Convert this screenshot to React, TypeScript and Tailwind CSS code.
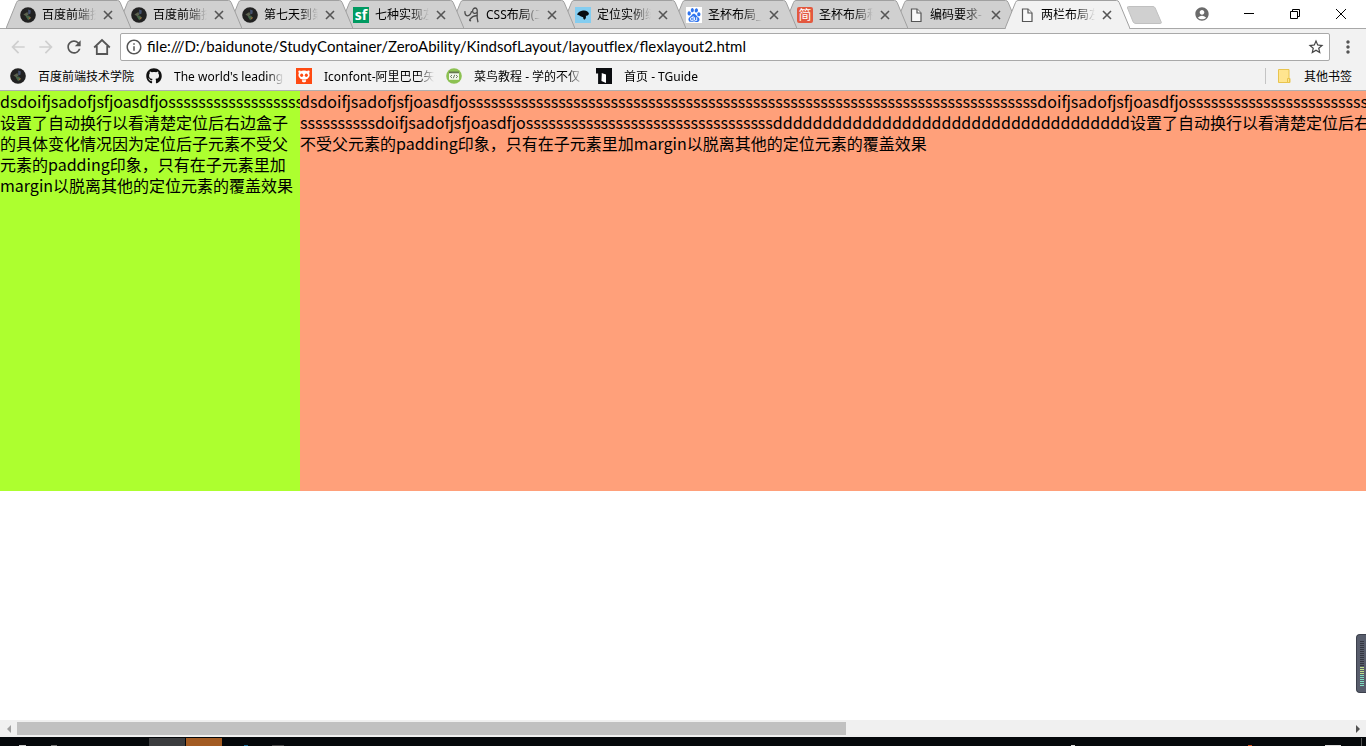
import type { ReactNode } from 'react';
import { MdArrowBack, MdArrowForward, MdRefresh, MdInfoOutline, MdStarBorder, MdAccountCircle, MdMoreVert } from 'react-icons/md';
import { FaGithub } from 'react-icons/fa';
import { SiBaidu } from 'react-icons/si';

const CollegeIcon = () => (
  <svg viewBox="0 0 16 16" className="size-4 shrink-0">
    <circle cx="8" cy="8" r="7.8" fill="#222222" />
    <path d="M8.2 2.6l2.6.8-.4 3.4-2.2.8z" fill="#46536f" />
    <path d="M3.400 7.400l4-2.400.8 2.800-1.600 1.800z" fill="#5d6350" />
    <path d="M5.600 9.200l3.400-.8 1.800 2.400-2.600 2.400z" fill="#46664a" />
    <path d="M8.400 10.400l2.800.2-1.800 2z" fill="#9a6a3c" />
  </svg>
);

const SfIcon = () => (
  <span className="flex size-4 shrink-0 items-center justify-center bg-[#009a61] font-['Open_Sans',sans-serif] text-sm leading-none font-bold text-white">sf</span>
);

const JianIcon = () => (
  <span className="flex size-4 shrink-0 items-center justify-center rounded-xs bg-[#e3583f] text-[13px] leading-none text-white">简</span>
);

const SketchIcon = () => (
  <svg viewBox="0 0 16 16" className="size-4 shrink-0" fill="none" stroke="#4a4a4a" strokeWidth="1.3">
    <path d="M1 4.200c-.4 2.400.6 4.600 2.400 4.600 2.200 0 3.600-2 4.200-4.600" />
    <path d="M12.600 5.200c-1 1.800-4 1.600-4-.9 0-1.900 1.200-3.300 2.700-3.300 1.700 0 2.100 1.800 1.900 4.200-.2 2.800-.4 6.200.8 10" />
    <path d="M13 8.800c-2.600-.2-5.200 1-7 3.600-.6 1 0 1.600 1 1" strokeWidth="1.500" />
  </svg>
);

const BirdIcon = () => (
  <svg viewBox="0 0 16 16" className="size-4 shrink-0">
    <path d="M0 0h16v16H0z" fill="#84cdf0" />
    <path d="M2 7.600C3 5.200 5.400 4 8 3.600c3.200-.4 5.600 1 6 3.400-.8 1.400-2 1.800-3.200 1.800.6 1.600-.2 3.400-1.400 4-.9-.6-1.300-1.500-1.200-2.600L6 9.600 4.400 8.400z" fill="#080c10" />
  </svg>
);

const PawIcon = () => (
  <span className="flex size-4 shrink-0 items-center justify-center bg-white text-[#2f74ee]"><SiBaidu size={14} /></span>
);

const FileIcon = () => (
  <svg viewBox="0 0 16 16" className="size-4 shrink-0" fill="#f8f8f8" stroke="#555" strokeWidth="1.200">
    <path d="M3.500 2h5.500l4 4v8.500h-9.500z" />
    <path d="M9 2v4h4" />
  </svg>
);

const SkullIcon = () => (
  <svg viewBox="0 0 16 16" className="size-4 shrink-0">
    <path d="M0 0h16v16H0z" fill="#ff4a12" />
    <circle cx="3.600" cy="3.800" r="1.300" fill="#fff" />
    <circle cx="12.400" cy="3.800" r="1.300" fill="#fff" />
    <ellipse cx="8" cy="7" rx="5.600" ry="4.600" fill="#fff" />
    <path d="M5.600 10.500h4.800l-.6 3.200q-1.800 1.200-3.600 0z" fill="#fff" />
    <ellipse cx="5.700" cy="7.200" rx="1.500" ry="1.700" fill="#ff4a12" />
    <ellipse cx="10.300" cy="7.200" rx="1.500" ry="1.700" fill="#ff4a12" />
    <path d="M5 11.800h6" stroke="#ff4a12" strokeWidth=".6" />
  </svg>
);

const CodeIcon = () => (
  <svg viewBox="0 0 16 16" className="size-4 shrink-0" fill="none">
    <circle cx="8" cy="8" r="7.800" fill="#8cc152" />
    <path d="M3 4.800h10v7H3z" fill="#f3f8ec" />
    <path d="M3 3.500h10v1.800H3z" fill="#66794f" />
    <path d="M6 7L4.400 8.500 6 10M10 7l1.600 1.500L10 10M8.700 6.800l-1.400 3.500" stroke="#5b6b50" strokeWidth=".9" />
  </svg>
);

const GuideIcon = () => (
  <svg viewBox="0 0 16 16" className="size-4 shrink-0">
    <path d="M0 0h16v16H0z" fill="#0b0d10" />
    <path d="M0 5.500h2.500V16H0z" fill="#f2f2f2" />
    <path d="M5.500 5l4.500 1.500V15L5.500 13z" fill="#fff" />
    <path d="M2.200 4.500L5.500 5v2L4.500 16H2.200z" fill="#0b0d10" />
  </svg>
);

const HomeIcon = () => (
  <svg viewBox="0 0 20 20" className="size-5" fill="none" stroke="#555" strokeWidth="1.800">
    <path d="M2.200 10.500L10 3l7.800 7.500M4.800 9v8h10.400V9" />
  </svg>
);

const tabs: { title: string; icon: ReactNode }[] = [
  { title: '百度前端技', icon: <CollegeIcon /> },
  { title: '百度前端技', icon: <CollegeIcon /> },
  { title: '第七天到第', icon: <CollegeIcon /> },
  { title: '七种实现左', icon: <SfIcon /> },
  { title: 'CSS布局(二', icon: <SketchIcon /> },
  { title: '定位实例练', icon: <BirdIcon /> },
  { title: '圣杯布局_', icon: <PawIcon /> },
  { title: '圣杯布局和', icon: <JianIcon /> },
  { title: '编码要求-', icon: <FileIcon /> },
  { title: '两栏布局左', icon: <FileIcon /> },
];

const bookmarks: { title: string; icon: ReactNode }[] = [
  { title: '百度前端技术学院', icon: <CollegeIcon /> },
  { title: "The world's leading", icon: <FaGithub size={16} className="shrink-0 text-[#111]" /> },
  { title: 'Iconfont-阿里巴巴矢', icon: <SkullIcon /> },
  { title: '菜鸟教程 - 学的不仅', icon: <CodeIcon /> },
  { title: '首页 - TGuide', icon: <GuideIcon /> },
];

const Tab = ({ title, icon, active, order }: { title: string; icon: ReactNode; active: boolean; order: number }) => (
  <div className="relative -mr-3.5 h-[29px] w-[125px] shrink-0" style={{ zIndex: order }}>
    <svg viewBox="0 0 125 29" className="absolute inset-0 size-full">
      <path d="M0 28.500L10.500 2.500Q11.200.5 13 .5H111.500Q113.500.5 114.200 2.500L125 28.500" fill={active ? '#f2f2f2' : '#d0d0d0'} stroke="#a0a0a0" />
      {active ? <path d="M1 28h123v1H1z" fill="#f2f2f2" /> : <path d="M0 28h125v1H0z" fill="#a0a0a0" />}
    </svg>
    <div className="relative flex h-full items-center pl-3.5">
      {icon}
      <span className="ml-1.5 w-[54px] overflow-hidden whitespace-nowrap mask-r-from-65%">{title}</span>
      <button aria-label={'关闭 ' + title} className="ml-1.5 flex size-3 items-center justify-center">
        <svg viewBox="0 0 10 10" className="size-2.5" stroke="#555" strokeWidth="1.600"><path d="M1 1l8 8M9 1L1 9" /></svg>
      </button>
    </div>
  </div>
);

const description = '设置了自动换行以看清楚定位后右边盒子的具体变化情况因为定位后子元素不受父元素的padding印象，只有在子元素里加margin以脱离其他的定位元素的覆盖效果';
const prefix = 'dsdoifjsadofjsfjoasdfjo';

export default function App() {
  return (
    <div className="relative flex h-screen flex-col overflow-hidden bg-white font-['Noto_Sans','Noto_Sans_CJK_SC',sans-serif] text-xs text-black">
      <header className="shrink-0 border-b border-[#b0b0b0] bg-[#f2f2f2]">
        <div className="flex h-[29px] border-b border-[#a8a8a8] bg-white">
          <nav aria-label="标签页" className="isolate flex pl-1.5">
            {tabs.map((t, i) => {
              const active = i === tabs.length - 1;
              return <Tab key={i} title={t.title} icon={t.icon} active={active} order={active ? tabs.length + 1 : tabs.length - i} />;
            })}
          </nav>
          <button aria-label="新标签页" className="ml-2.5 flex h-7 items-center pt-0.5">
            <svg viewBox="0 0 36 19" className="h-[19px] w-9"><path d="M2.500.5H27q1.500 0 2.200 1.500l6 14q.5 1.500-1 1.500H10q-2 0-2.800-1.500l-5.700-14q-.5-1.500 1-1.500z" fill="#d0d0d0" stroke="#c0c0c0" /></svg>
          </button>
          <div className="flex h-[27px] flex-1 items-center justify-end pr-0.5">
            <button aria-label="用户" className="mr-4"><MdAccountCircle size={16} color="#6b6b6b" /></button>
            <button aria-label="最小化" className="flex w-[46px] justify-center">
              <svg viewBox="0 0 10 10" className="size-2.5" stroke="#000"><path d="M0 4.500h10" /></svg>
            </button>
            <button aria-label="还原" className="flex w-[46px] justify-center">
              <svg viewBox="0 0 10 10" className="size-2.5" fill="none" stroke="#000"><path d="M.5 2.500h7v7h-7zM2.500 2.500v-2h7v7h-2" /></svg>
            </button>
            <button aria-label="关闭" className="flex w-[46px] justify-center">
              <svg viewBox="0 0 10 10" className="size-2.5" stroke="#000"><path d="M0 0l10 10M10 0L0 10" /></svg>
            </button>
          </div>
        </div>

        <div className="flex items-center gap-2 pt-1 pl-2">
          <button aria-label="后退"><MdArrowBack size={20} color="#cfcfcf" /></button>
          <button aria-label="前进"><MdArrowForward size={20} color="#cfcfcf" /></button>
          <button aria-label="重新加载"><MdRefresh size={20} color="#555" /></button>
          <button aria-label="主页"><HomeIcon /></button>
          <div className="flex h-7 flex-1 items-center rounded-xs border border-[#a9a9a9] bg-white px-1">
            <MdInfoOutline size={18} color="#555" />
            <input aria-label="地址" className="ml-1 h-5 flex-1 pb-0.5 font-['Lato',sans-serif] text-[15px] outline-none" defaultValue="file:///D:/baidunote/StudyContainer/ZeroAbility/KindsofLayout/layoutflex/flexlayout2.html" />
            <button aria-label="添加书签"><MdStarBorder size={18} color="#444" /></button>
          </div>
          <button aria-label="菜单" className="mr-2"><MdMoreVert size={20} color="#555" /></button>
        </div>

        <nav aria-label="书签" className="flex h-[29px] items-center gap-3 pr-3.5 pl-2.5">
          {bookmarks.map((b) => (
            <a key={b.title} href="#" className="flex items-center gap-3">
              {b.icon}
              <span className={b.title.length > 10 ? 'w-[110px] overflow-hidden pt-0.5 whitespace-nowrap mask-r-from-85%' : 'pt-0.5 whitespace-nowrap'}>{b.title}</span>
            </a>
          ))}
          <a href="#" className="ml-auto flex items-center gap-3">
            <span className="h-4 w-px bg-[#c4c4c4]" />
            <svg viewBox="0 0 14 16" className="h-4 w-3.5"><path d="M.5 1.500h10.500v9h1v4H.5z" fill="#ffe58f" stroke="#e8c44e" /><path d="M9.500 10.500h2v4h-2z" fill="#ffe58f" stroke="#e8c44e" /></svg>
            <span className="pt-0.5">其他书签</span>
          </a>
        </nav>
      </header>

      <main className="min-h-0 flex-1 overflow-hidden font-['Noto_Sans_CJK_SC',sans-serif] text-base leading-[21px]">
        <div className="flex h-[400px]">
          <section className="w-[300px] shrink-0 overflow-hidden bg-[#adff2f]">
            <p className="whitespace-nowrap">{prefix + 's'.repeat(18)}</p>
            <p>{description}</p>
          </section>
          <section className="min-w-0 flex-1 overflow-hidden bg-[#ffa07a] whitespace-nowrap">
            <p>{prefix + 's'.repeat(76) + prefix.slice(2) + 's'.repeat(24)}</p>
            <p>{'s'.repeat(10) + prefix.slice(2) + 's'.repeat(33) + 'd'.repeat(36) + description.slice(0, 15)}</p>
            <p>{description.slice(33)}</p>
          </section>
        </div>
      </main>

      <aside aria-label="音量" className="absolute top-[634px] right-0 flex h-[59px] w-2.5 flex-col items-center gap-px rounded-l-sm border border-r-0 border-[#3c404c] bg-[#585d6c] pt-1.5">
        {Array.from({ length: 23 }, (_, i) => (
          <span key={i} className={i < 13 ? 'h-px w-1 bg-[#33363f]' : i < 17 ? 'h-px w-1 bg-[#bfe08a]' : 'h-px w-1 bg-[#7fdcc0]'} />
        ))}
      </aside>

      <div className="flex h-[17px] shrink-0 items-center bg-[#f0f0f0]">
        <button aria-label="向左滚动" className="flex w-[17px] justify-center"><svg viewBox="0 0 4 8" className="h-2 w-1"><path d="M4 0v8L0 4z" fill="#a0a0a0" /></svg></button>
        <div className="flex-1"><div className="h-[13px] w-[62.2%] bg-[#c1c1c1]" /></div>
        <button aria-label="向右滚动" className="flex w-[17px] justify-center"><svg viewBox="0 0 4 8" className="h-2 w-1"><path d="M0 0v8l4-4z" fill="#505050" /></svg></button>
      </div>

      <footer className="flex h-[9px] shrink-0 items-end bg-[#05080b]">
        <span className="ml-[19px] h-px w-[7px] bg-[#c8c8c8]" />
        <span className="ml-[25px] h-px w-1.5 bg-[#777]" />
        <span className="ml-[92px] h-2 w-9 bg-[#3b3c3e]" />
        <span className="ml-px h-2 w-9 bg-[#a35b22]" />
        <span className="ml-[22px] h-px w-1 bg-[#1c6f9c]" />
        <span className="ml-6 h-px w-3 bg-[#444]" />
        <span className="ml-auto h-px w-1 bg-[#ddd]" />
        <span className="ml-[173px] h-px w-1 bg-[#d8501c]" />
        <span className="ml-[73px] h-px w-4 bg-[#ddd]" />
        <span className="mr-1 ml-5 h-2 w-px bg-[#555]" />
      </footer>
    </div>
  );
}
